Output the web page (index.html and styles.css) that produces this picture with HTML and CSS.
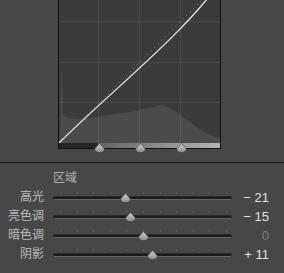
FILE: index.html
```html
<!DOCTYPE html>
<html lang="zh-CN">
<head>
  <meta charset="UTF-8" />
  <title>色调曲线</title>
  <link rel="stylesheet" href="styles.css">
</head>
<body>
  <div class="curve-panel">
    <div class="graph">
      <svg class="plot" width="161" height="161" viewBox="0 0 161 161">
        <rect width="161" height="161" fill="#3b3b3b"/>
        <polygon class="histogram" points="0,161 1,150 2,90 3,92 4,132 6,135 10,136 20,137 30,136 39,135 45,134 55,132 65,131 75,129 85,127 95,125 101,123 106,124 112,127 120,132 128,138 135,143 142,148 150,152 156,155 161,156 161,161"/>
        <g class="grid">
          <line x1="39.5" y1="0" x2="39.5" y2="161"/>
          <line x1="80.5" y1="0" x2="80.5" y2="161"/>
          <line x1="121.5" y1="0" x2="121.5" y2="161"/>
          <line x1="0" y1="39.5" x2="161" y2="39.5"/>
          <line x1="0" y1="80.5" x2="161" y2="80.5"/>
          <line x1="0" y1="120.5" x2="161" y2="120.5"/>
        </g>
        <line class="diagonal" x1="0" y1="161" x2="161" y2="0"/>
        <path class="curve" d="M0,161 C50,111 125,52 161,0"/>
      </svg>
      <div class="graph-bar"></div>
      <svg class="split" style="left:35px" width="11" height="10" viewBox="0 0 11 10"><path d="M5.5 0.5 L10.2 5.6 Q10.6 9.5 5.5 9.5 Q0.4 9.5 0.8 5.6 Z"/></svg>
      <svg class="split" style="left:76px" width="11" height="10" viewBox="0 0 11 10"><path d="M5.5 0.5 L10.2 5.6 Q10.6 9.5 5.5 9.5 Q0.4 9.5 0.8 5.6 Z"/></svg>
      <svg class="split" style="left:117px" width="11" height="10" viewBox="0 0 11 10"><path d="M5.5 0.5 L10.2 5.6 Q10.6 9.5 5.5 9.5 Q0.4 9.5 0.8 5.6 Z"/></svg>
    </div>
  </div>

  <div class="zones">
    <div class="zone-title">区域</div>

    <div class="zone-row">
      <span class="zone-label">高光</span>
      <div class="slider">
        <div class="ticks"><i></i><i></i><i></i><i></i><i></i><i></i><i></i><i></i><i></i><i></i><i></i></div>
        <div class="rail"></div>
        <svg class="knob" style="left:67px" width="11" height="10" viewBox="0 0 11 10"><path d="M5.5 0.5 L10.2 5.6 Q10.6 9.5 5.5 9.5 Q0.4 9.5 0.8 5.6 Z"/></svg>
      </div>
      <span class="zone-value">− 21</span>
    </div>

    <div class="zone-row">
      <span class="zone-label">亮色调</span>
      <div class="slider">
        <div class="ticks"><i></i><i></i><i></i><i></i><i></i><i></i><i></i><i></i><i></i><i></i><i></i></div>
        <div class="rail"></div>
        <svg class="knob" style="left:72px" width="11" height="10" viewBox="0 0 11 10"><path d="M5.5 0.5 L10.2 5.6 Q10.6 9.5 5.5 9.5 Q0.4 9.5 0.8 5.6 Z"/></svg>
      </div>
      <span class="zone-value">− 15</span>
    </div>

    <div class="zone-row">
      <span class="zone-label">暗色调</span>
      <div class="slider">
        <div class="ticks"><i></i><i></i><i></i><i></i><i></i><i></i><i></i><i></i><i></i><i></i><i></i></div>
        <div class="rail"></div>
        <svg class="knob" style="left:85px" width="11" height="10" viewBox="0 0 11 10"><path d="M5.5 0.5 L10.2 5.6 Q10.6 9.5 5.5 9.5 Q0.4 9.5 0.8 5.6 Z"/></svg>
      </div>
      <span class="zone-value zero">0</span>
    </div>

    <div class="zone-row">
      <span class="zone-label">阴影</span>
      <div class="slider">
        <div class="ticks"><i></i><i></i><i></i><i></i><i></i><i></i><i></i><i></i><i></i><i></i><i></i></div>
        <div class="rail"></div>
        <svg class="knob" style="left:94px" width="11" height="10" viewBox="0 0 11 10"><path d="M5.5 0.5 L10.2 5.6 Q10.6 9.5 5.5 9.5 Q0.4 9.5 0.8 5.6 Z"/></svg>
      </div>
      <span class="zone-value">+ 11</span>
    </div>
  </div>

  <svg width="0" height="0" class="defs">
    <defs>
      <linearGradient id="knobFill" x1="0" y1="0" x2="0" y2="1">
        <stop offset="0" stop-color="#d2d2d2"/>
        <stop offset="1" stop-color="#8c8c8c"/>
      </linearGradient>
    </defs>
  </svg>
</body>
</html>
```

FILE: styles.css
```css
body {
  margin: 0;
  background: #474747;
  font-family: 'Liberation Sans', 'Noto Sans CJK SC', sans-serif;
  font-size: 12px;
  color: #b0b0b0;
}

/* tone curve */
.curve-panel {
  height: 149px;
  padding: 0 0 13px 58px;
  display: flex;
  align-items: flex-end;
  overflow: hidden;
  border-bottom: 1px solid #161616;
}
.graph {
  position: relative;
  width: 161px;
  border: 1px solid #111;
}
.plot {
  display: block;
}
.histogram {
  fill: #4b4b4b;
}
.grid line {
  stroke: rgba(255, 255, 255, 0.08);
  stroke-width: 1;
}
.diagonal {
  stroke: #8a8a8a;
  stroke-width: 1;
  stroke-dasharray: 1 4;
}
.curve {
  fill: none;
  stroke: #ebebeb;
  stroke-width: 1.3;
}
.graph-bar {
  height: 5px;
  background: linear-gradient(to right, #262626 0, #262626 24.5%, #646464 24.5%, #b4b4b4 100%);
}
.split {
  position: absolute;
  top: 161px;
}
.split path, .knob path {
  fill: url(#knobFill);
  stroke: #3a3a3a;
  stroke-width: 0.6;
}

/* zone sliders */
.zones {
  padding-top: 7px;
}
.zone-title {
  padding-left: 53px;
  line-height: 16px;
  margin-bottom: 2px;
  color: #b0b0b0;
}
.zone-row {
  display: grid;
  grid-template-columns: 53px 179px 37px;
  height: 19px;
  line-height: 19px;
}
.zone-label {
  text-align: right;
  padding-right: 9px;
  color: #bcbcbc;
}
.slider {
  position: relative;
  padding-top: 4px;
}
.ticks {
  display: flex;
  justify-content: space-between;
  width: 167px;
  height: 2px;
  margin: 0 0 2px 7px;
}
.ticks i {
  width: 1px;
  height: 2px;
  background: #5c5c5c;
}
.rail {
  height: 2px;
  background: #1b1b1b;
  border: 1px solid #2a2a2a;
  border-bottom-color: #666;
  border-radius: 3px;
}
.knob {
  position: absolute;
  top: 5px;
}
.zone-value {
  text-align: right;
  font-size: 13px;
  color: #e2e2e2;
}
.zone-value.zero {
  color: #7c7c7c;
}
.defs {
  position: absolute;
}
```
